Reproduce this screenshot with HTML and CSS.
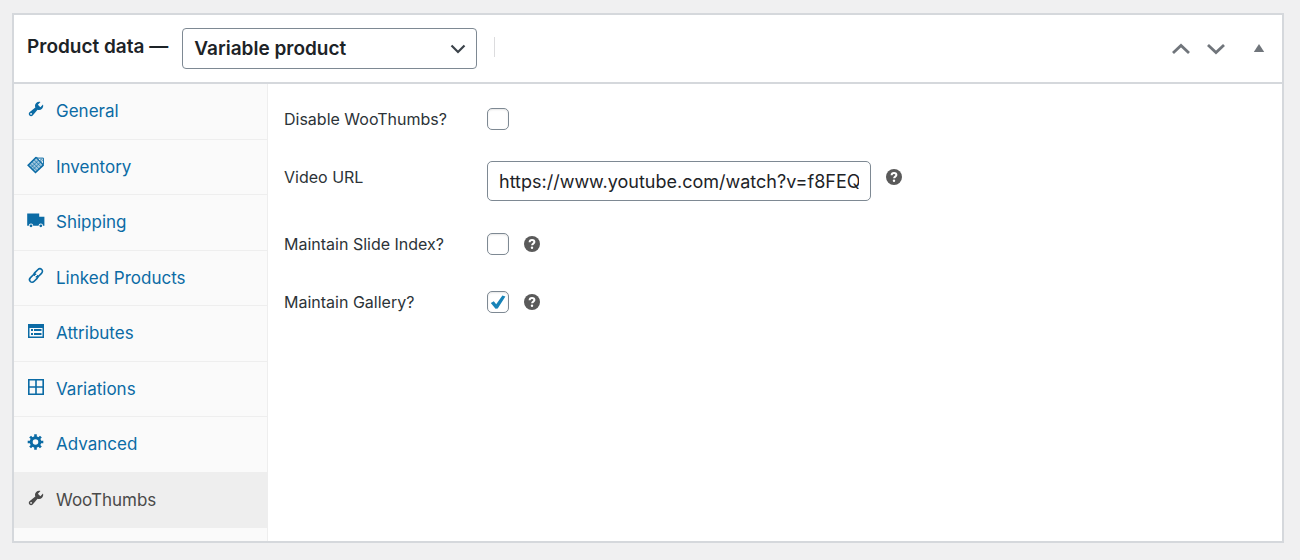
FILE: index.html
```html
<!DOCTYPE html>
<html lang="en">
<head>
<meta charset="utf-8">
<meta name="viewport" content="width=device-width, initial-scale=1">
<title>Product data</title>
<link rel="stylesheet" href="styles.css">
</head>
<body>
<svg class="defs" aria-hidden="true">
  <symbol id="wrench" viewBox="0 0 20 20"><path fill="currentColor" d="M16.68 9.77c-1.34 1.34-3.3 1.67-4.95.99l-5.41 6.52c-.99.99-2.59.99-3.58 0s-.99-2.59 0-3.57l6.52-5.42c-.68-1.65-.35-3.61.99-4.95 1.28-1.28 3.12-1.62 4.72-1.06l-2.89 2.89 2.82 2.82 2.86-2.87c.53 1.58.18 3.39-1.08 4.65zM3.81 16.21c.4.39 1.04.39 1.43 0 .4-.4.4-1.04 0-1.43-.39-.4-1.03-.4-1.43 0-.39.39-.39 1.03 0 1.43z"/></symbol>
  <symbol id="help" viewBox="0 0 16 16"><circle cx="8" cy="8" r="8" fill="#5a5a5a"/><path d="M5.6 6.3C5.7 4.6 6.7 4 8 4c1.400 0 2.400.8 2.400 2 0 1.600-2.300 1.600-2.300 3.200" fill="none" stroke="#fff" stroke-width="2"/><circle cx="8" cy="11.700" r="1.200" fill="#fff"/></symbol>
</svg>
<main class="panel">
  <header class="panel-header">
    <h2 class="title"><label for="type">Product data —</label></h2>
    <div class="select-box">
      <select id="type" class="select"><option>Variable product</option></select>
      <svg class="select-arrow" viewBox="0 0 16 10" aria-hidden="true"><path d="M1.500 1.500 8 8l6.500-6.500" fill="none" stroke="#3c434a" stroke-width="2.200"/></svg>
    </div>
    <span class="divider"></span>
    <div class="handles">
      <button class="handle" type="button" aria-label="Move up"><svg width="18" height="12" viewBox="0 0 18 12"><path d="M1 10 9 2.400 17 10" fill="none" stroke="currentColor" stroke-width="2.800"/></svg></button>
      <button class="handle" type="button" aria-label="Move down"><svg width="18" height="12" viewBox="0 0 18 12"><path d="M1 2 9 9.600 17 2" fill="none" stroke="currentColor" stroke-width="2.800"/></svg></button>
      <button class="handle toggle" type="button" aria-label="Toggle panel"><svg width="12" height="10" viewBox="0 0 12 10"><path d="M6 0 11.200 8H.8z" fill="currentColor"/></svg></button>
    </div>
  </header>
  <div class="panel-body">
    <nav class="sidebar">
      <ul class="tabs">
        <li><a class="tab" href="#general"><svg class="icon" aria-hidden="true"><use href="#wrench"/></svg><span>General</span></a></li>
        <li><a class="tab" href="#inventory"><svg class="icon" viewBox="0 0 18 18" aria-hidden="true"><path d="M9 1.300 1.200 9.200l7.300 7.300 8-7.500.4-6.200-5.700-.6z" fill="#9fc6de"/><path d="M9.200 1.200 1.200 9.200l7.300 7.300 8-7.600M9.200 1.200l7.300 7.700" fill="none" stroke="currentColor" stroke-width="1.600"/><path d="M3.100 7.700l7.300 7.200M5.100 5.800l7.200 7.300M7.100 3.800l7.200 7.300M4 11.500 11.700 4M6 13.500l7.600-7.400" stroke="currentColor" stroke-width=".7"/><path d="M10.500 2.100h5.900v6" fill="#fafafa" stroke="currentColor"/><circle cx="14.300" cy="4.300" r="1" fill="none" stroke="currentColor" stroke-width=".7"/></svg><span>Inventory</span></a></li>
        <li><a class="tab" href="#shipping"><svg class="icon" viewBox="0 0 18 18" aria-hidden="true"><path d="M.2 2.400h12v3.400h5.200v9H.2z" fill="currentColor"/><circle cx="4" cy="14.800" r="2.200" fill="#fafafa"/><circle cx="13.800" cy="14.800" r="2.200" fill="#fafafa"/><circle cx="4" cy="14.800" r="1.400" fill="currentColor"/><circle cx="13.800" cy="14.800" r="1.400" fill="currentColor"/></svg><span>Shipping</span></a></li>
        <li><a class="tab" href="#linked"><svg class="icon" viewBox="0 0 18 18" aria-hidden="true"><g fill="none" stroke="currentColor" stroke-width="1.600" stroke-linecap="round"><path d="M7.300 8.200c-.5-1-.1-1.900.6-2.600l2.900-2.900c1.300-1.300 2.900-1.200 3.900-.2s1.100 2.600-.2 3.900l-2.900 2.900c-.6.6-1.400.8-2.200.5"/><path d="M10.700 8.800c.5 1 .1 1.900-.6 2.600l-2.900 2.900c-1.300 1.300-2.900 1.200-3.900.2s-1.100-2.600.2-3.900l2.900-2.900c.6-.6 1.400-.8 2.200-.5"/></g></svg><span>Linked Products</span></a></li>
        <li><a class="tab" href="#attributes"><svg class="icon" viewBox="0 0 18 18" aria-hidden="true"><path d="M1 2h16v14H1z" fill="currentColor"/><path d="M2.500 6h13v8.500h-13z" fill="#fafafa"/><path d="M4 7h2v2H4zM7 7h7.500v2H7zM4 11h2v2H4zM7 11h7.500v2H7z" fill="currentColor"/></svg><span>Attributes</span></a></li>
        <li><a class="tab" href="#variations"><svg class="icon" viewBox="0 0 18 18" aria-hidden="true"><path d="M1.800 1.800h14.400v14.400H1.800zM9 1.800v14.400M1.800 9h14.400" fill="none" stroke="currentColor" stroke-width="1.600"/></svg><span>Variations</span></a></li>
        <li><a class="tab" href="#advanced"><svg class="icon" viewBox="0 0 18 18" aria-hidden="true"><circle cx="8.500" cy="9" r="4.300" fill="none" stroke="currentColor" stroke-width="3"/><path d="M8.500 1.200v3M8.500 13.800v3M.7 9h3M13.300 9h3M3.100 3.600l2.100 2.100M11.800 12.300l2.100 2.100M3.100 14.400l2.100-2.100M11.800 5.700l2.100-2.100" stroke="currentColor" stroke-width="2.600"/></svg><span>Advanced</span></a></li>
        <li><a class="tab active" href="#woothumbs" aria-current="page"><svg class="icon" aria-hidden="true"><use href="#wrench"/></svg><span>WooThumbs</span></a></li>
      </ul>
    </nav>
    <form class="fields">
      <div class="field">
        <label for="disable">Disable WooThumbs?</label>
        <div class="control"><input id="disable" class="check" type="checkbox"></div>
      </div>
      <div class="field field-text">
        <label for="video">Video URL</label>
        <div class="control"><input id="video" class="text" type="text" value="https://www.youtube.com/watch?v=f8FEQ"><svg class="help" aria-hidden="true"><use href="#help"/></svg></div>
      </div>
      <div class="field">
        <label for="index">Maintain Slide Index?</label>
        <div class="control"><input id="index" class="check" type="checkbox"><svg class="help" aria-hidden="true"><use href="#help"/></svg></div>
      </div>
      <div class="field">
        <label for="gallery">Maintain Gallery?</label>
        <div class="control"><span class="check-box"><input id="gallery" class="check" type="checkbox" checked><svg class="tick" viewBox="0 0 16 16" aria-hidden="true"><path d="m.8 9 3-1.700 2.400 3L12.400 1.500l3 1-7.700 12-2.200.2z" fill="#1783b8"/></svg></span><svg class="help" aria-hidden="true"><use href="#help"/></svg></div>
      </div>
    </form>
  </div>
</main>
</body>
</html>
```
FILE: styles.css
```css
* { box-sizing: border-box; }

body {
  margin: 0;
  padding: 13px 16px 16px 12px;
  background: #f0f0f1;
  color: #2c3338;
  font-family: Inter, "Liberation Sans", sans-serif;
  font-size: 16px;
  line-height: 24px;
}

.defs { display: none; }

.panel {
  background: #fff;
  border: 2px solid #d5d8dc;
}

.panel-header {
  display: flex;
  align-items: center;
  min-height: 69px;
  padding: 0 17px 0 13px;
  border-bottom: 2px solid #d5d8dc;
}

.title {
  margin: 0 14px 4px 0;
  color: #1d2327;
  font-size: 19px;
  font-weight: 600;
}

.select-box { position: relative; }

.select {
  display: block;
  appearance: none;
  width: 295px;
  height: 41px;
  padding: 0 36px 0 11px;
  border: 1px solid #7e8993;
  border-radius: 4px;
  background: #fff;
  color: #1d2327;
  font: 600 19px/24px Inter, "Liberation Sans", sans-serif;
}

.select-arrow {
  position: absolute;
  top: 16px;
  right: 11px;
  width: 16px;
  height: 10px;
  pointer-events: none;
}

.divider {
  width: 1px;
  height: 20px;
  margin: 0 0 4px 17px;
  background: #dcdcde;
}

.handles {
  display: flex;
  align-items: center;
  gap: 17px;
  margin-left: auto;
}

.handle {
  display: flex;
  padding: 0;
  border: 0;
  background: none;
  color: #70757b;
}

.toggle { margin-left: 11px; }

.panel-body {
  display: grid;
  grid-template-columns: 254px 1fr;
}

.sidebar {
  padding-bottom: 13px;
  border-right: 1px solid #eee;
  background: #fafafa;
}

.tabs {
  display: grid;
  grid-auto-rows: 1fr;
  min-height: 444px;
  margin: 0;
  padding: 0;
  list-style: none;
}

.tab {
  display: flex;
  align-items: center;
  gap: 11px;
  height: 100%;
  padding: 0 13px;
  border-bottom: 1px solid #eee;
  color: #0b6ba5;
  font-size: 17px;
  text-decoration: none;
}

.tab.active {
  background: #eee;
  color: #4a4a4a;
}

.icon {
  flex: none;
  width: 18px;
  height: 18px;
  margin-bottom: 4px;
}

.fields {
  display: flex;
  flex-direction: column;
  gap: 27px;
  padding: 19px 16px;
}

.field {
  display: grid;
  grid-template-columns: 203px 1fr;
  align-items: center;
  min-height: 31px;
}

.control {
  display: flex;
  align-items: center;
  gap: 15px;
}

.check {
  display: block;
  appearance: none;
  width: 22px;
  height: 22px;
  margin: 0;
  border: 1px solid #7e8993;
  border-radius: 5px;
  background: #fff;
  box-shadow: inset 0 1px 2px rgba(0, 0, 0, .1);
}

.check-box { position: relative; }

.tick {
  position: absolute;
  inset: 3px;
  width: 16px;
  height: 16px;
  pointer-events: none;
}

.field-text,
.field-text .control { align-items: start; }

.field-text label { padding-top: 4px; }

.field-text .help { margin-top: 8px; }

.text {
  width: 384px;
  height: 40px;
  padding: 0 11px;
  border: 1px solid #7e8993;
  border-radius: 5px;
  background: #fff;
  color: #1d2327;
  font: 18px/24px Inter, "Liberation Sans", sans-serif;
}

.help {
  flex: none;
  width: 16px;
  height: 16px;
}
```
